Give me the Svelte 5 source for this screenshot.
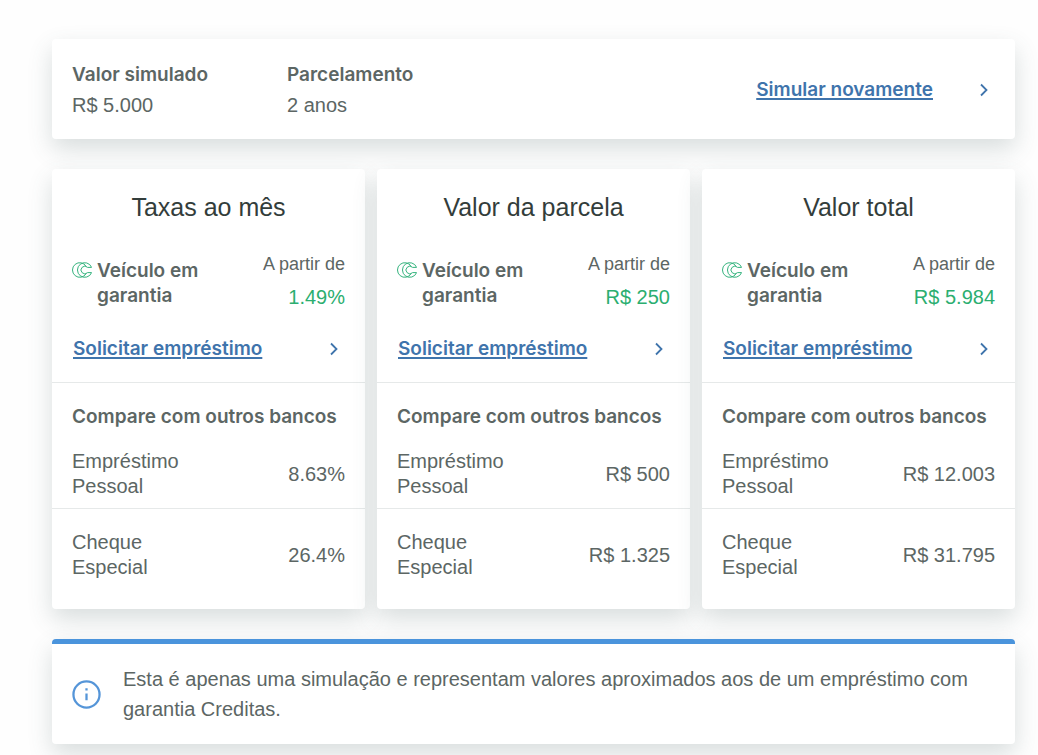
<script lang="ts">
	interface Offer {
		title: string;
		value: string;
		personal: string;
		overdraft: string;
	}

	const offers: Offer[] = [
		{ title: 'Taxas ao mês', value: '1.49%', personal: '8.63%', overdraft: '26.4%' },
		{ title: 'Valor da parcela', value: 'R$ 250', personal: 'R$ 500', overdraft: 'R$ 1.325' },
		{ title: 'Valor total', value: 'R$ 5.984', personal: 'R$ 12.003', overdraft: 'R$ 31.795' }
	];
</script>

{#snippet chevron()}
	<svg class="chevron" viewBox="0 0 10 14" aria-hidden="true">
		<path d="M2 1.5 7.5 7 2 12.5" />
	</svg>
{/snippet}

<main>
	<section class="card summary">
		<dl>
			<div>
				<dt>Valor simulado</dt>
				<dd>R$ 5.000</dd>
			</div>
			<div>
				<dt>Parcelamento</dt>
				<dd>2 anos</dd>
			</div>
		</dl>
		<a class="action" href="#simular"><span>Simular novamente</span>{@render chevron()}</a>
	</section>

	<div class="offers">
		{#each offers as offer}
			<section class="card">
				<div class="top">
					<h2>{offer.title}</h2>
					<div class="product">
						<svg class="logo" viewBox="0 0 20 16" aria-hidden="true">
							<path d="M14.2 4.5A7.3 7.3 0 1 0 14.2 11.5" />
							<path d="M19.6 5.4A7.3 7.3 0 1 0 19.6 10.6H15.6A3.8 3.8 0 1 1 15.6 5.4Z" />
						</svg>
						<h3>Veículo em garantia</h3>
						<p class="price">
							<span>A partir de</span>
							<strong>{offer.value}</strong>
						</p>
					</div>
					<a class="action" href="#solicitar">
						<span>Solicitar empréstimo</span>{@render chevron()}
					</a>
				</div>
				<h3 class="compare">Compare com outros bancos</h3>
				<dl class="banks">
					<div>
						<dt>Empréstimo Pessoal</dt>
						<dd>{offer.personal}</dd>
					</div>
					<div>
						<dt>Cheque Especial</dt>
						<dd>{offer.overdraft}</dd>
					</div>
				</dl>
			</section>
		{/each}
	</div>

	<aside class="card notice">
		<svg class="info" viewBox="0 0 28 28" aria-hidden="true">
			<circle cx="14" cy="14" r="12.6" />
			<path d="M14 13v6.5M14 8v2.2" />
		</svg>
		<p>
			Esta é apenas uma simulação e representam valores aproximados aos de um empréstimo com
			garantia Creditas.
		</p>
	</aside>
</main>

<style>
	:global(body) {
		margin: 0;
		background: #fefefe;
	}

	main {
		display: flex;
		flex-direction: column;
		gap: 30px;
		padding: 39px 23px 11px 52px;
		font-family: 'Liberation Sans', Arial, sans-serif;
		font-size: 20px;
		line-height: 25px;
		color: #5c6664;
	}

	h2,
	h3,
	p,
	dl,
	dd {
		margin: 0;
	}

	h3,
	.summary dt,
	.action {
		font-family: Inter, sans-serif;
		font-size: 19px;
		font-weight: 600;
	}

	.card {
		background: #fff;
		border-radius: 4px;
		box-shadow: 0 10px 24px rgba(66, 88, 88, 0.2);
	}

	.summary {
		display: flex;
		align-items: center;
		justify-content: space-between;
		padding: 21px 20px 19px;
		line-height: 30px;
	}

	.summary dl {
		display: grid;
		grid-template-columns: 215px auto;
	}

	.action {
		display: flex;
		align-items: center;
		justify-content: space-between;
		gap: 46px;
		padding: 0 6px 0 1px;
		color: #3f74ac;
		text-decoration: none;
	}

	.action span {
		text-decoration: underline;
		text-decoration-thickness: 2px;
		text-underline-offset: 2px;
	}

	.chevron {
		width: 10px;
		height: 14px;
		fill: none;
		stroke: currentColor;
		stroke-width: 1.8;
	}

	.offers {
		display: grid;
		grid-template-columns: repeat(3, minmax(0, 1fr));
		gap: 12px;
	}

	.top {
		padding: 20px 20px 21px;
		border-bottom: 1px solid #e6e9e9;
	}

	h2 {
		margin-bottom: 23px;
		font-size: 25px;
		font-weight: 400;
		line-height: 36px;
		text-align: center;
		color: #333d3b;
	}

	.product {
		display: flex;
		align-items: center;
		margin-bottom: 22px;
	}

	.logo {
		flex: none;
		align-self: flex-start;
		width: 20px;
		height: 16px;
		margin: 14px 5px 0 0;
		fill: none;
		stroke: #35b37e;
		stroke-width: 1;
	}

	.product h3 {
		flex: 1;
		padding-top: 3px;
	}

	.price {
		display: flex;
		flex-direction: column;
		line-height: 33px;
		text-align: right;
		white-space: nowrap;
	}

	.price span {
		font-size: 18px;
	}

	.price strong {
		font-weight: 400;
		color: #2bae70;
	}

	.compare {
		padding: 21px 20px 0;
	}

	.banks div {
		display: flex;
		align-items: center;
		justify-content: space-between;
		padding: 20px 20px 9px;
	}

	.banks div + div {
		padding: 21px 20px 29px;
		border-top: 1px solid #e6e9e9;
	}

	.banks dt {
		width: 130px;
	}

	.banks div + div dt {
		width: 90px;
	}

	.notice {
		display: flex;
		align-items: center;
		gap: 22px;
		padding: 20px;
		border-top: 5px solid #4a94dc;
		line-height: 30px;
	}

	.info {
		flex: none;
		width: 29px;
		height: 29px;
		fill: none;
		stroke: #5595d8;
		stroke-width: 2.2;
	}
</style>
